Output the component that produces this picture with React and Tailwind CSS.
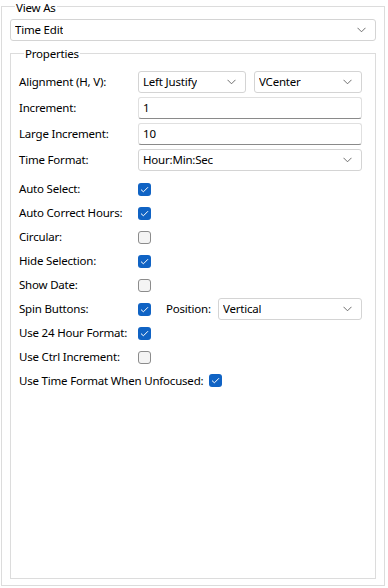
import React from 'react';

const font = { fontFamily: '"Noto Sans", "Open Sans", sans-serif' };

function Chevron() {
  return (
    <svg width="9" height="6" viewBox="0 0 9 6" className="shrink-0">
      <path d="M0.5 0.8 L4.5 4.8 L8.5 0.8" fill="none" stroke="#5f5f5f" strokeWidth="0.9" />
    </svg>
  );
}

function Combo({ value, className = '' }) {
  return (
    <div className={`h-[22px] flex items-center justify-between pl-[4px] pr-[9px] bg-white border border-[#d4d4d4] rounded-[3px] ${className}`}>
      <span className="truncate">{value}</span>
      <Chevron />
    </div>
  );
}

function TextBox({ value }) {
  return (
    <div className="h-[22px] w-[224px] flex items-center pl-[4px] bg-white border border-[#e0e0e0] border-b-[#8a8a8a] rounded-[3px]">
      {value}
    </div>
  );
}

function Check({ checked }) {
  if (checked) {
    return (
      <div className="w-[13px] h-[13px] rounded-[3px] bg-[#1063c4] flex items-center justify-center shrink-0">
        <svg width="9" height="7" viewBox="0 0 9 7">
          <path d="M1 3.6 L3.4 5.8 L8 1.2" fill="none" stroke="white" strokeWidth="1" />
        </svg>
      </div>
    );
  }
  return <div className="w-[13px] h-[13px] rounded-[3px] bg-[#f4f4f4] border border-[#8c8c8c] shrink-0"></div>;
}

function Row({ label, children }) {
  return (
    <div className="flex items-center h-[22px]">
      <span className="w-[119px] shrink-0">{label}</span>
      {children}
    </div>
  );
}

function CheckRow({ label, checked, children }) {
  return (
    <div className="flex items-center h-[24px]">
      <span className="w-[119px] shrink-0 whitespace-nowrap">{label}</span>
      <Check checked={checked} />
      {children}
    </div>
  );
}

export default function App() {
  return (
    <div className="w-[388px] h-[588px] bg-white text-[11.5px] tracking-[-0.2px] text-black" style={font}>
      <fieldset className="ml-[1px] w-[384px] h-[586px] border border-[#dcdcdc] pl-[8px] pr-[7px]">
        <legend className="ml-[5px] px-[1px] h-[12px] leading-[16px]">View As</legend>
        <Combo value="Time Edit" className="mt-[7px] w-[366px]" />

        <fieldset className="mt-[6px] w-[366px] h-[532px] border border-[#dcdcdc] pl-[8px] pr-[12px]">
          <legend className="ml-[5px] px-[1px] leading-[13px]">Properties</legend>
          <div className="mt-[11px] flex flex-col gap-[4px]">
            <Row label="Alignment (H, V):">
              <Combo value="Left Justify" className="w-[108px]" />
              <Combo value="VCenter" className="w-[108px] ml-[8px]" />
            </Row>
            <Row label="Increment:">
              <TextBox value="1" />
            </Row>
            <Row label="Large Increment:">
              <TextBox value="10" />
            </Row>
            <Row label="Time Format:">
              <Combo value="Hour:Min:Sec" className="w-[224px]" />
            </Row>
          </div>
          <div className="mt-[6px] flex flex-col">
            <CheckRow label="Auto Select:" checked />
            <CheckRow label="Auto Correct Hours:" checked />
            <CheckRow label="Circular:" />
            <CheckRow label="Hide Selection:" checked />
            <CheckRow label="Show Date:" />
            <CheckRow label="Spin Buttons:" checked>
              <span className="ml-[15px] w-[52px]">Position:</span>
              <Combo value="Vertical" className="w-[144px]" />
            </CheckRow>
            <CheckRow label="Use 24 Hour Format:" checked />
            <CheckRow label="Use Ctrl Increment:" />
            <div className="flex items-center h-[23px]">
              <span className="whitespace-nowrap mr-[6px]">Use Time Format When Unfocused:</span>
              <Check checked />
            </div>
          </div>
        </fieldset>
      </fieldset>
    </div>
  );
}
